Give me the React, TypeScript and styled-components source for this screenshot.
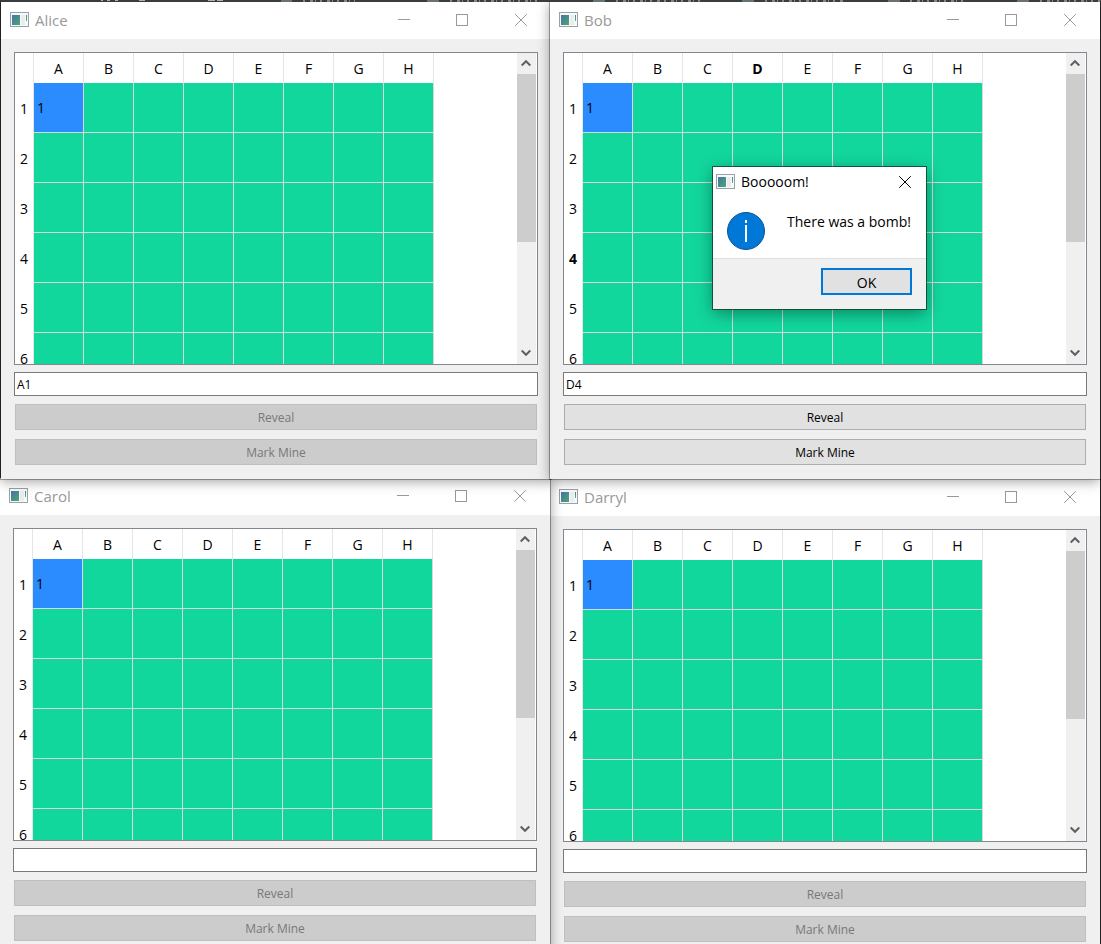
import React from "react";
import styled, { createGlobalStyle, css } from "styled-components";

const GlobalStyle = createGlobalStyle`
  *, *::before, *::after { box-sizing: border-box; }
  body {
    margin: 0;
    background: #3c3c3e;
    color: #000;
    font-family: "Open Sans", "Noto Sans", sans-serif;
    font-size: 14px;
  }
  button, input { font-family: inherit; }
`;

const Screen = styled.div`
  height: 100vh;
  overflow: hidden;
`;

const Desktop = styled.main`
  display: grid;
  grid-template-columns: minmax(0, 1fr) minmax(0, 1fr);
  align-content: start;
  padding-right: 1px;
`;

const Backdrop = styled.svg`
  display: block;
  width: 100%;
  height: 2px;
`;

const Frame = styled.section<{ $layer: number; $nudgeX?: boolean; $nudgeY?: boolean }>`
  position: relative;
  z-index: ${(p) => p.$layer};
  min-width: 0;
  background: #f0f0f0;
  box-shadow: 0 0 0 1px rgba(0, 0, 0, 0.32), 0 2px 12px rgba(0, 0, 0, 0.4);
  clip-path: inset(0 -20px -20px -20px);
  ${(p) => p.$nudgeX && css`margin: 0 -1px 0 1px;`}
  ${(p) => p.$nudgeY && css`margin: -1px 0 1px;`}
`;

const TitleBar = styled.header`
  display: flex;
  align-items: center;
  height: 37px;
  padding: 0 0 2px 9px;
  background: #fff;
  color: #999;
`;

const Title = styled.h1`
  flex: 1;
  margin: 0 0 0 6px;
  font-size: 15px;
  line-height: 20px;
  font-weight: 400;
`;

const CaptionButton = styled.button<{ $width?: number }>`
  display: flex;
  align-items: center;
  justify-content: center;
  width: ${(p) => p.$width ?? 58}px;
  height: 30px;
  padding: 0;
  border: 0;
  background: none;
  color: inherit;
`;

const Body = styled.div`
  display: flex;
  flex-direction: column;
  padding: 13px 13px 14px;
`;

const GridView = styled.div`
  display: flex;
  justify-content: space-between;
  height: 313px;
  padding-right: 1px;
  border: 1px solid #828790;
  background: #fff;
  overflow: hidden;
`;

const Board = styled.table`
  table-layout: fixed;
  align-self: flex-start;
  width: 419px;
  border-collapse: separate;
  border-spacing: 0;
  line-height: 20px;
`;

const ColumnHead = styled.th<{ $current?: boolean; $corner?: boolean }>`
  width: ${(p) => (p.$corner ? 19 : 50)}px;
  height: 30px;
  padding: 2px 0 0;
  border-right: 1px solid #e5e5e5;
  font-weight: ${(p) => (p.$current ? 700 : 400)};
  text-align: center;
`;

const RowHead = styled.th<{ $current?: boolean }>`
  height: 50px;
  padding: 2px 0 0;
  border-right: 1px solid #e5e5e5;
  font-weight: ${(p) => (p.$current ? 700 : 400)};
  text-align: center;
`;

const Cell = styled.td<{ $open: boolean }>`
  height: 50px;
  padding: 0 3px;
  border-right: 1px solid #d8d8d8;
  border-bottom: 1px solid #d8d8d8;
  background: ${(p) => (p.$open ? "#2a8cff" : "#12d79d")};
  background-clip: padding-box;
`;

const ScrollBar = styled.div`
  display: flex;
  flex-direction: column;
  flex: none;
  width: 19px;
  background: #f0f0f0;
`;

const ScrollArrow = styled.button`
  display: flex;
  align-items: center;
  justify-content: center;
  height: 21px;
  padding: 0 1px 1px 0;
  border: 0;
  background: none;
`;

const Track = styled.div`
  flex: 1;
`;

const Thumb = styled.div`
  height: 168px;
  background: #cdcdcd;
`;

const PositionInput = styled.input`
  width: 100%;
  height: 24px;
  margin: 7px 0 8px;
  padding: 0 2px;
  border: 1px solid #7a7a7a;
  border-radius: 0;
  outline: none;
  background: #fff;
  color: #000;
  font-size: 12px;
`;

const ActionButton = styled.button`
  height: 26px;
  margin: 0 1px;
  padding: 2px 0 0;
  border: 1px solid #adadad;
  border-radius: 0;
  background: #e1e1e1;
  color: #000;
  font-size: 12px;
  line-height: 16px;

  & + & { margin-top: 9px; }

  &:disabled {
    border-color: #bfbfbf;
    background: #ccc;
    color: #787878;
  }
`;

const Dialog = styled.div`
  position: absolute;
  top: 165px;
  left: 163px;
  width: 213px;
  background: #fff;
  box-shadow: 0 0 0 1px rgba(20, 50, 40, 0.75), 0 4px 16px rgba(0, 0, 0, 0.4);
`;

const DialogBar = styled.header`
  display: flex;
  align-items: center;
  height: 31px;
  padding: 0 0 2px 3px;
`;

const DialogTitle = styled(Title).attrs({ as: "h2" })`
  font-size: 14px;
  line-height: 20px;
`;

const DialogContent = styled.div`
  display: flex;
  align-items: flex-start;
  gap: 22px;
  height: 60px;
  padding: 14px 0 0 14px;
`;

const Message = styled.p`
  margin: 0;
  line-height: 20px;
  white-space: nowrap;
`;

const DialogFooter = styled.footer`
  display: flex;
  justify-content: flex-end;
  height: 51px;
  padding: 9px 14px 0 0;
  border-top: 1px solid #dfdfdf;
  background: #f0f0f0;
`;

const OkButton = styled.button`
  width: 91px;
  height: 27px;
  padding: 2px 0 0;
  border: 2px solid #0078d7;
  border-radius: 0;
  background: #e1e1e1;
  color: #000;
  font-size: 14px;
  line-height: 20px;
`;

const AppIcon = () => (
  <svg width="19" height="15" viewBox="0 0 19 15" aria-hidden="true">
    <defs>
      <linearGradient id="screen" x1="0" y1="0" x2="1" y2="1">
        <stop offset="0" stopColor="#4774a8" />
        <stop offset="1" stopColor="#4ba76f" />
      </linearGradient>
      <linearGradient id="meter" x1="0" y1="0" x2="0" y2="1">
        <stop offset="0" stopColor="#3f7fa0" />
        <stop offset="1" stopColor="#4fb878" />
      </linearGradient>
    </defs>
    <rect x="0.5" y="0.5" width="18" height="14" fill="#f8f9fb" stroke="#9aa0aa" />
    <rect x="2" y="3" width="8" height="10" fill="url(#screen)" />
    <rect x="11" y="3" width="4" height="10" fill="#ebecee" />
    <rect x="16" y="3" width="1" height="6" fill="url(#meter)" />
  </svg>
);

const MinimizeIcon = () => (
  <svg width="12" height="12" viewBox="0 0 12 12" aria-hidden="true" shapeRendering="crispEdges">
    <path d="M0 5.5H12" stroke="currentColor" />
  </svg>
);

const MaximizeIcon = () => (
  <svg width="12" height="12" viewBox="0 0 12 12" aria-hidden="true">
    <rect x="0.5" y="0.5" width="11" height="11" fill="none" stroke="currentColor" />
  </svg>
);

const CloseIcon = () => (
  <svg width="12" height="12" viewBox="0 0 12 12" aria-hidden="true">
    <path d="M0.2 0.2L11.8 11.8M11.8 0.2L0.2 11.8" stroke="currentColor" fill="none" />
  </svg>
);

const Chevron = ({ down }: { down?: boolean }) => (
  <svg width="10" height="8" viewBox="0 0 10 8" aria-hidden="true">
    <path
      d={down ? "M0.7 1.5L5 5.8L9.3 1.5" : "M0.7 6.5L5 2.2L9.3 6.5"}
      fill="none"
      stroke="#606060"
      strokeWidth="2"
    />
  </svg>
);

const InfoIcon = () => (
  <svg width="38" height="38" viewBox="0 0 38 38" role="img" aria-label="Information">
    <circle cx="19" cy="19" r="18.5" fill="#0078d7" stroke="#0a5596" />
    <rect x="18" y="8" width="2" height="3" fill="#fff" />
    <rect x="18" y="13" width="2" height="17" fill="#fff" />
  </svg>
);

/* Sliver of the editor behind the windows: file icons and tab labels. */
const EditorSliver = () => (
  <Backdrop aria-hidden="true">
    <path d="M101 0.5H103M107 0.5H110M115 0.5H118M139 0.5H145M208 0.5H215M217 0.5H223" stroke="#b0b0b0" />
    <path d="M281 1H292M427 1H439M593 1H605M742 1H754M888 1H900M1017 1H1029" stroke="#657276" strokeWidth="2" />
    <path
      d="M303 1H355M450 1H540M616 1H660M664 1H700M765 1H845M910 1H968M1040 1H1100"
      stroke="#8a8582"
      strokeWidth="2"
      strokeDasharray="2 5 3 2 1 4"
    />
  </Backdrop>
);

const COLUMNS = ["A", "B", "C", "D", "E", "F", "G", "H"];
const ROWS = [1, 2, 3, 4, 5, 6];

type PlayerProps = {
  name: string;
  position?: string;
  enabled?: boolean;
  current?: [string, number];
  layer: number;
  nudgeX?: boolean;
  nudgeY?: boolean;
  children?: React.ReactNode;
};

function PlayerWindow({
  name, position = "", enabled, current, layer, nudgeX, nudgeY, children,
}: PlayerProps) {
  return (
    <Frame $layer={layer} $nudgeX={nudgeX} $nudgeY={nudgeY} aria-label={name}>
      <TitleBar>
        <AppIcon />
        <Title>{name}</Title>
        <CaptionButton aria-label="Minimize"><MinimizeIcon /></CaptionButton>
        <CaptionButton aria-label="Maximize"><MaximizeIcon /></CaptionButton>
        <CaptionButton $width={60} aria-label="Close"><CloseIcon /></CaptionButton>
      </TitleBar>
      <Body>
        <GridView>
          <Board>
            <thead>
              <tr>
                <ColumnHead $corner />
                {COLUMNS.map((c) => (
                  <ColumnHead key={c} scope="col" $current={current?.[0] === c}>{c}</ColumnHead>
                ))}
              </tr>
            </thead>
            <tbody>
              {ROWS.map((r) => (
                <tr key={r}>
                  <RowHead scope="row" $current={current?.[1] === r}>{r}</RowHead>
                  {COLUMNS.map((c) => {
                    const open = c === "A" && r === 1;
                    return <Cell key={c} $open={open}>{open ? "1" : null}</Cell>;
                  })}
                </tr>
              ))}
            </tbody>
          </Board>
          <ScrollBar>
            <ScrollArrow aria-label="Scroll up"><Chevron /></ScrollArrow>
            <Track><Thumb /></Track>
            <ScrollArrow aria-label="Scroll down"><Chevron down /></ScrollArrow>
          </ScrollBar>
        </GridView>
        <PositionInput type="text" aria-label="Position" defaultValue={position} />
        <ActionButton disabled={!enabled}>Reveal</ActionButton>
        <ActionButton disabled={!enabled}>Mark Mine</ActionButton>
      </Body>
      {children}
    </Frame>
  );
}

export default function App() {
  return (
    <Screen>
      <GlobalStyle />
      <EditorSliver />
      <Desktop>
        <PlayerWindow name="Alice" position="A1" layer={3} nudgeX />
        <PlayerWindow name="Bob" position="D4" enabled current={["D", 4]} layer={4}>
          <Dialog role="dialog" aria-labelledby="dialog-title">
            <DialogBar>
              <AppIcon />
              <DialogTitle id="dialog-title">Booooom!</DialogTitle>
              <CaptionButton $width={42} aria-label="Close"><CloseIcon /></CaptionButton>
            </DialogBar>
            <DialogContent>
              <InfoIcon />
              <Message>There was a bomb!</Message>
            </DialogContent>
            <DialogFooter>
              <OkButton>OK</OkButton>
            </DialogFooter>
          </Dialog>
        </PlayerWindow>
        <PlayerWindow name="Carol" layer={2} nudgeY />
        <PlayerWindow name="Darryl" layer={1} />
      </Desktop>
    </Screen>
  );
}
